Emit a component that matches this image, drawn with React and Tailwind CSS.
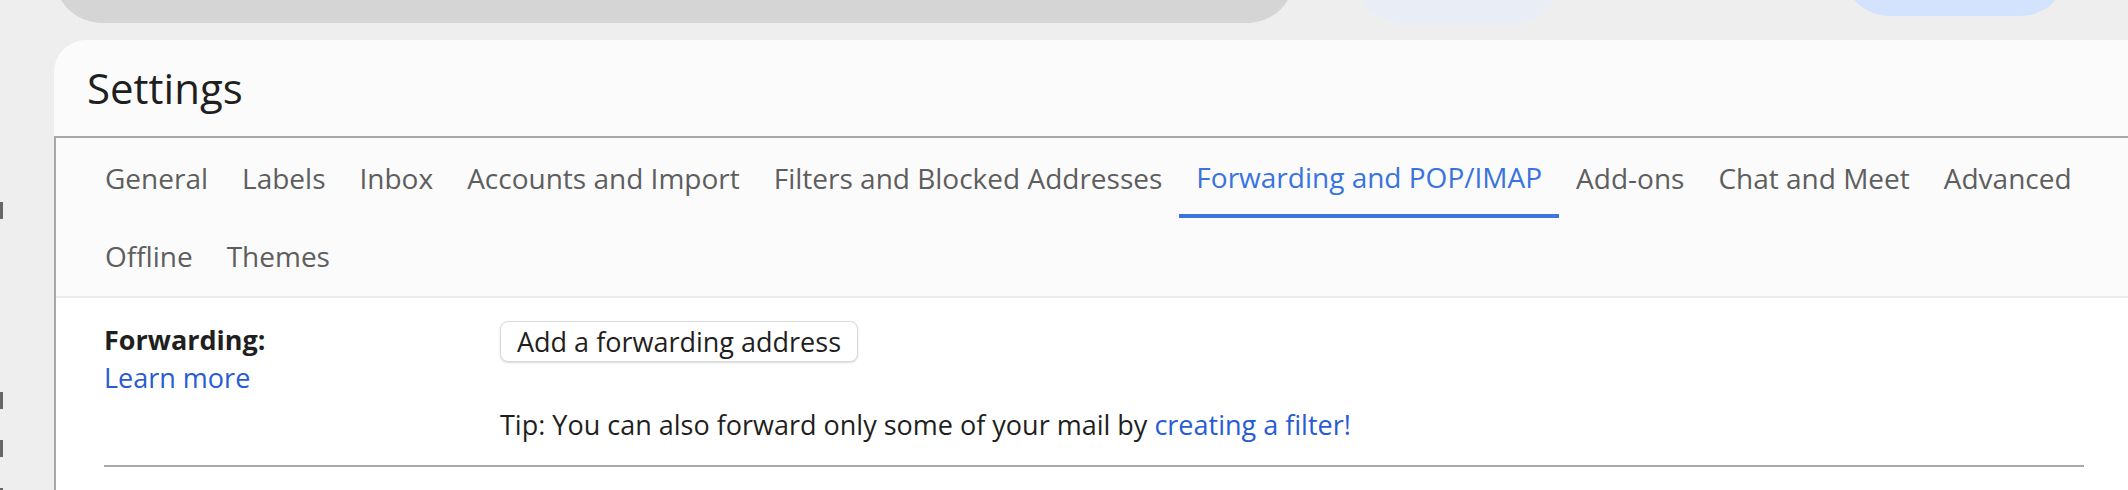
import React from 'react';

const tabsRowOne = [
  { label: 'General' },
  { label: 'Labels' },
  { label: 'Inbox' },
  { label: 'Accounts and Import' },
  { label: 'Filters and Blocked Addresses' },
  { label: 'Forwarding and POP/IMAP', active: true },
  { label: 'Add-ons' },
  { label: 'Chat and Meet' },
  { label: 'Advanced' },
];

const tabsRowTwo = [{ label: 'Offline' }, { label: 'Themes' }];

const Tab = ({ label, active }) => (
  <div
    className={`flex h-full items-center px-[17px] pb-[2px] text-[28px] whitespace-nowrap ${
      active ? 'border-b-4 border-[#3a76e0] pt-[2px] text-[#3873e0]' : 'text-[#5e5e5e]'
    }`}
  >
    {label}
  </div>
);

const App = () => {
  return (
    <div className="flex h-[490px] w-full flex-col overflow-hidden bg-[#eeeeee] font-['Open_Sans','Noto_Sans',sans-serif]">
      {/* top bar, cut off by the window */}
      <div className="flex h-[40px] shrink-0 items-start">
        <div className="ml-[54px] -mt-[73px] h-[96px] w-[1241px] shrink-0 rounded-full bg-[#d5d5d5]" />
        <div className="ml-[61px] -mt-[72px] h-[96px] w-[204px] shrink-0 rounded-full bg-[#e9edf6]" />
        <div className="ml-[282px] -mt-[80px] h-[96px] w-[226px] shrink-0 rounded-full bg-[#d3e3fd]" />
      </div>

      <div className="flex flex-1">
        {/* sidebar counts, mostly hidden */}
        <div className="flex w-[54px] shrink-0 flex-col pt-[162px]">
          <div className="h-[17px] w-[3px] bg-[#666666]" />
          <div className="mt-[173px] h-[17px] w-[3px] bg-[#666666]" />
          <div className="mt-[31px] h-[17px] w-[3px] bg-[#666666]" />
          <div className="mt-[31px] h-[17px] w-[3px] bg-[#666666]" />
        </div>

        {/* settings card */}
        <div className="flex flex-1 flex-col rounded-tl-[32px] bg-[#fbfbfb]">
          <div className="flex h-[96px] shrink-0 items-center pl-[33px]">
            <h1 className="text-[42px] leading-[52px] text-[#1f1f1f]">Settings</h1>
          </div>

          <div className="flex flex-1 flex-col border-l-2 border-t-2 border-[#a8a8a8]">
            {/* tabs */}
            <div className="border-b-2 border-[#ebebeb] pl-[32px] pt-[2px]">
              <div className="flex h-[78px]">
                {tabsRowOne.map((tab) => (
                  <Tab key={tab.label} {...tab} />
                ))}
              </div>
              <div className="flex h-[78px]">
                {tabsRowTwo.map((tab) => (
                  <Tab key={tab.label} {...tab} />
                ))}
              </div>
            </div>

            {/* forwarding section */}
            <div className="flex-1 bg-white pl-[48px] pr-[44px] pt-[23px] text-[27px] text-[#1f1f1f]">
              <div className="flex">
                <div className="w-[396px] shrink-0">
                  <div className="font-bold leading-[38px]">Forwarding:</div>
                  <a className="block leading-[38px] text-[#285bd4]">Learn more</a>
                </div>
                <div>
                  <button className="h-[41px] rounded-[8px] border border-[#dadada] bg-white px-[16px] text-[27px] leading-none text-[#1f1f1f] shadow-[0_1px_2px_rgba(0,0,0,0.15)]">
                    Add a forwarding address
                  </button>
                  <div className="mt-[43px] leading-[38px]">
                    Tip: You can also forward only some of your mail by{' '}
                    <a className="text-[#285bd4]">creating a filter!</a>
                  </div>
                </div>
              </div>
              <div className="mt-[21px] h-[2px] bg-[#a8a8a8]" />
            </div>
          </div>
        </div>
      </div>
    </div>
  );
};

export default App;
